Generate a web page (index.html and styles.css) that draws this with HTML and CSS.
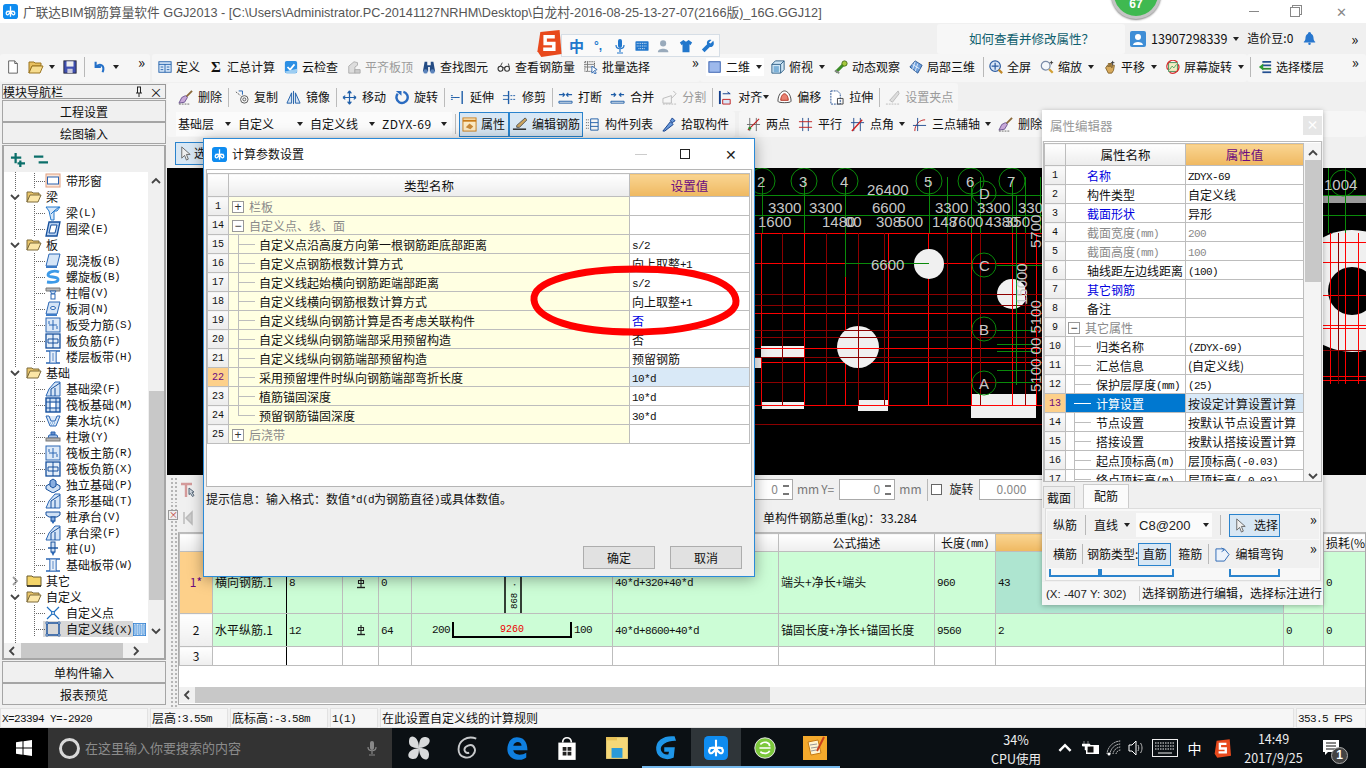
FILE: index.html
```html
<!DOCTYPE html>
<html lang="zh-CN">
<head>
<meta charset="utf-8">
<title>广联达BIM钢筋算量软件</title>
<link rel="stylesheet" href="styles.css">
</head>
<body>
<svg class="defs" aria-hidden="true">
<symbol id="logo" viewBox="0 0 16 16"><rect width="16" height="16" rx="3" fill="#0f8cf0"/><path d="M8 2.500v11M3.500 8H12.500M8 8c-3-1-5 .5-4.500 2.500s3 1 4.500-2.500c1.500 3.500 4 4.500 4.500 2.500S11 7 8 8" fill="none" stroke="#fff" stroke-width="1.400"/></symbol>
<symbol id="new" viewBox="0 0 16 16"><path d="M3 1h7l3 3v11H3z" fill="#fff" stroke="#555"/><path d="M10 1v3h3" fill="#ddd" stroke="#555"/></symbol>
<symbol id="open" viewBox="0 0 16 16"><path d="M1 3h5l1 1h6v3H4l-3 7z" fill="#e8c060" stroke="#9a7420"/><path d="M4 7h11l-3 7H1z" fill="#f6dc8e" stroke="#9a7420"/></symbol>
<symbol id="save" viewBox="0 0 16 16"><rect x="1" y="1" width="14" height="14" fill="#3f4fb0" stroke="#223"/><rect x="4" y="1.500" width="8" height="6" fill="#eee"/><rect x="5" y="10" width="6" height="5" fill="#ccd"/></symbol>
<symbol id="undo" viewBox="0 0 16 16"><path d="M3 2v6h6M3 8c5-5 11-2 8 6" fill="none" stroke="#2470c8" stroke-width="2.400"/></symbol>
<symbol id="def" viewBox="0 0 16 16"><rect x="1" y="2" width="14" height="12" fill="#d6e6f8" stroke="#1c5ca8"/><path d="M1 5h14M8 5v9M3 8h3M3 11h3M10 8h3M10 11h3" stroke="#1c5ca8" fill="none"/></symbol>
<symbol id="cloud" viewBox="0 0 16 16"><rect x="1" y="1" width="14" height="14" rx="2" fill="#2c8fe4"/><path d="M4 8l3 3 5-6" fill="none" stroke="#fff" stroke-width="2"/><path d="M1 13l14-3v3l-2 2H3z" fill="#9ccdf2"/></symbol>
<symbol id="level" viewBox="0 0 16 16"><path d="M2 15V7l6-5 4 1v3l-3 2v7z" fill="#ddd" stroke="#aaa"/><path d="M9 11h6v4H9z" fill="#ccc" stroke="#aaa"/></symbol>
<symbol id="binoc" viewBox="0 0 16 16"><path d="M3 2h3v4h4V2h3l2 11H9V8H7v5H1z" fill="#234b84"/><circle cx="4" cy="13" r="2.500" fill="#5c84bc"/><circle cx="12" cy="13" r="2.500" fill="#5c84bc"/></symbol>
<symbol id="glass" viewBox="0 0 16 16"><circle cx="4" cy="10" r="2.800" fill="none" stroke="#333" stroke-width="1.300"/><circle cx="11.500" cy="10" r="2.800" fill="none" stroke="#333" stroke-width="1.300"/><path d="M6.800 9l2-.5M4 7l2-4M14 8l-1-4" stroke="#333" fill="none"/></symbol>
<symbol id="batch" viewBox="0 0 16 16"><rect x="1" y="2" width="11" height="11" fill="none" stroke="#444" stroke-dasharray="1.500 1"/><path d="M1 5h11M1 8h11M4 2v11" stroke="#777"/><path d="M9 7l6 4-3 1 2 3-2 1-1-3-2 2z" fill="#fff" stroke="#2b66b0"/></symbol>
<symbol id="d2" viewBox="0 0 16 16"><rect x="1" y="2" width="13" height="12" fill="#9db9ec" stroke="#2a55a8"/></symbol>
<symbol id="cube" viewBox="0 0 16 16"><path d="M1 5l4-4h10v10l-4 4H1z" fill="#cfe6f5" stroke="#23567e"/><path d="M1 5h10v10M11 5l4-4" fill="none" stroke="#23567e"/><path d="M3 7h6v7H3z" fill="#7eb2d8"/></symbol>
<symbol id="orbit" viewBox="0 0 16 16"><path d="M2 14L13 3" stroke="#3c8c28" stroke-width="3.500"/><circle cx="12" cy="4" r="3" fill="#a4c83c" stroke="#446a12"/><path d="M1 12l5 3" stroke="#888" stroke-width="2"/></symbol>
<symbol id="cube3" viewBox="0 0 16 16"><path d="M1 8l6-7 8 5-5 9z" fill="#6fa0dc" stroke="#24508c"/><path d="M4 5l8 5M7 2l-3 9M10 4l-3 9" stroke="#e8f0fa" fill="none"/></symbol>
<symbol id="full" viewBox="0 0 16 16"><circle cx="7" cy="7" r="6" fill="#dbe7f7" stroke="#2a5aa0" stroke-width="1.400"/><path d="M7 3v8M3 7h8" stroke="#2a5aa0" stroke-width="1.400"/><path d="M11 11l4 4" stroke="#c08828" stroke-width="2.500"/></symbol>
<symbol id="zoom" viewBox="0 0 16 16"><circle cx="6.500" cy="6.500" r="5" fill="#f4f7fb" stroke="#7a8ba8" stroke-width="1.400"/><path d="M10.500 10.500l4 4" stroke="#d2a034" stroke-width="2.600"/><path d="M13 1v4M11 3h4" stroke="#333"/></symbol>
<symbol id="pan" viewBox="0 0 16 16"><path d="M3 9l2-3 1 2V4h2v4V4h2v5l1-3h2l-1 6-2 3H6z" fill="#d7aa5c" stroke="#80602a"/><path d="M11 1v5M9 3h4" stroke="#333"/></symbol>
<symbol id="rot" viewBox="0 0 16 16"><rect x="3" y="3" width="10" height="10" fill="#f4ecc2" stroke="#3a8a50"/><path d="M4 11l3-4 2 2 3-4" stroke="#40a060" fill="none"/><path d="M2 11A7 7 0 0 1 13 2.500" fill="none" stroke="#d83030" stroke-width="1.500"/><path d="M14 5a7 7 0 0 1-10 9" fill="none" stroke="#d83030" stroke-width="1.500"/></symbol>
<symbol id="floor" viewBox="0 0 16 16"><path d="M5 2h10M5 6h10" stroke="#234f90" stroke-width="2"/><path d="M5 10h10" stroke="#2e8c30" stroke-width="2"/><path d="M5 14h10" stroke="#234f90" stroke-width="2"/><path d="M1 8l5-4v8z" fill="#2e9c34"/></symbol>
<symbol id="del" viewBox="0 0 16 16"><path d="M15 1L6 10" stroke="#8a6a3a" stroke-width="2"/><path d="M8 6l2 2-3 5-6 1 3-6z" fill="#c8a8d8" stroke="#6c5490"/><path d="M1 15h12" stroke="#666" stroke-dasharray="2 1"/></symbol>
<symbol id="copy" viewBox="0 0 16 16"><circle cx="11" cy="10" r="4" fill="none" stroke="#555"/><circle cx="11" cy="10" r="1.600" fill="none" stroke="#555"/><path d="M2 2l5 4" stroke="#555" stroke-dasharray="2 1"/><path d="M5 1h4v4" stroke="#2060b0" fill="none"/></symbol>
<symbol id="mirror" viewBox="0 0 16 16"><path d="M6 3L1 14h5zM10 3l5 11h-5z" fill="#d6e4f4" stroke="#1f5ea8"/><path d="M8 1v14" stroke="#1f5ea8"/></symbol>
<symbol id="move" viewBox="0 0 16 16"><path d="M8 1v14M1 8h14M8 1L6 3.500M8 1l2 2.500M8 15l-2-2.500M8 15l2-2.500M1 8l2.500-2M1 8l2.500 2M15 8l-2.500-2M15 8l-2.500 2" fill="none" stroke="#1f5ea8" stroke-width="1.300"/></symbol>
<symbol id="rotate" viewBox="0 0 16 16"><path d="M10 2a6 6 0 1 1-6 2" fill="none" stroke="#2a6bc0" stroke-width="2.600"/><path d="M2 1h6v5z" fill="#2a6bc0"/></symbol>
<symbol id="ext" viewBox="0 0 16 16"><path d="M13 1v14" stroke="#1f5ea8" stroke-width="1.500"/><path d="M1 6h3M1 10h3M5 8h6" stroke="#1f5ea8" stroke-dasharray="2 1" fill="none"/><path d="M1 8h9" stroke="#1f5ea8"/></symbol>
<symbol id="trim" viewBox="0 0 16 16"><path d="M7 1v14" stroke="#1f5ea8" stroke-width="1.500"/><path d="M1 6h6M1 10h6" stroke="#1f5ea8"/><path d="M9 6h6M9 10h6" stroke="#1f5ea8" stroke-dasharray="2 1"/></symbol>
<symbol id="brk" viewBox="0 0 16 16"><path d="M1 12h14v2H1z" fill="none" stroke="#1f5ea8"/><path d="M1 5h6M9 5h6M5 3l2 2-2 2M11 3L9 5l2 2" fill="none" stroke="#1f5ea8" stroke-width="1.300"/></symbol>
<symbol id="mrg" viewBox="0 0 16 16"><path d="M1 12h14v2H1z" fill="none" stroke="#1f5ea8"/><path d="M1 5h5M10 5h5M4 3l2 2-2 2M12 3l-2 2 2 2" fill="none" stroke="#1f5ea8" stroke-width="1.300"/></symbol>
<symbol id="spl" viewBox="0 0 16 16"><path d="M1 14V9l9-3v8zM12 1l3 3-5 5" fill="none" stroke="#bbb"/><path d="M1 15h14" stroke="#bbb" stroke-dasharray="2 1"/></symbol>
<symbol id="align" viewBox="0 0 16 16"><path d="M2 1v14" stroke="#123e8c" stroke-width="2"/><path d="M5 4h8l-3-2" fill="none" stroke="#123e8c"/><path d="M5 10h8v5H5z" fill="#dbe6f6" stroke="#c02020"/></symbol>
<symbol id="off" viewBox="0 0 16 16"><path d="M1 12C1 5 5 1 8 1s7 4 7 11c0 2-14 2-14 0z" fill="#fff" stroke="#444"/><path d="M4 11C4 7 6 4 8 4s4 3 4 7z" fill="#e88070" stroke="#b03020"/></symbol>
<symbol id="str" viewBox="0 0 16 16"><path d="M2 1h7l3 3v11H2z" fill="#fff" stroke="#1f4c90" stroke-dasharray="2 1"/><path d="M9 9h6v6H9z" fill="none" stroke="#444"/></symbol>
<symbol id="grip" viewBox="0 0 16 16"><path d="M14 1L5 11l3 2 7-9z" fill="#ddd" stroke="#bbb"/><path d="M1 15h14" stroke="#bbb" stroke-dasharray="2 1"/></symbol>
<symbol id="attr" viewBox="0 0 16 16"><rect x="1" y="1" width="14" height="14" fill="#fbeac4" stroke="#c97c1a"/><path d="M1 4h14" stroke="#c97c1a" stroke-width="2"/><path d="M4 11l4-4 4 3-3 3z" fill="#c98a3a"/></symbol>
<symbol id="edit" viewBox="0 0 16 16"><path d="M1 13h14" stroke="#222" stroke-width="1.500"/><path d="M14 1l2 2-8 8H5V9z" fill="#cca35c" stroke="#555"/></symbol>
<symbol id="list" viewBox="0 0 16 16"><path d="M6 2h8v12H6zM6 6h8M6 10h8" fill="none" stroke="#1f5ea8"/><path d="M1 3h3M1 6h3M1 9h3M1 12h3" stroke="#555" stroke-dasharray="1 1"/></symbol>
<symbol id="pick" viewBox="0 0 16 16"><path d="M2 15l8-10 3 3L4 15zM10 4l2-3 3 3-3 2z" fill="#6c9cdc" stroke="#123e8c"/></symbol>
<symbol id="two" viewBox="0 0 16 16"><path d="M4 1v14M11 1v14M1 8h14" stroke="#6e6e6e"/><path d="M2 14L14 2" stroke="#c02020" stroke-width="1.300"/><circle cx="4" cy="12" r="1.500" fill="#2a8a2a"/></symbol>
<symbol id="par" viewBox="0 0 16 16"><path d="M5 1v14M11 1v14" stroke="#234f90"/><path d="M1 5h14M1 11h14" stroke="#c02020"/></symbol>
<symbol id="ang" viewBox="0 0 16 16"><path d="M4 1v14M11 1v14M1 6h14" stroke="#234f90"/><path d="M2 15L13 3" stroke="#d02020" stroke-width="1.500"/></symbol>
<symbol id="tri" viewBox="0 0 16 16"><path d="M3 15C3 8 8 3 14 3" fill="none" stroke="#c02020"/><path d="M1 9h14M6 1v14" stroke="#234f90"/></symbol>
<symbol id="ptr" viewBox="0 0 16 16"><path d="M4 1v12l3-3 2 5 2-1-2-5h4z" fill="#eee" stroke="#666"/></symbol>
<symbol id="plus" viewBox="0 0 16 16"><path d="M6 1v11M1 6h11" stroke="#0b6f6a" stroke-width="2.400"/><path d="M11 9v7M8 12h8" stroke="#0b6f6a" stroke-width="2.400"/></symbol>
<symbol id="minus" viewBox="0 0 16 16"><path d="M1 5h10M6 11h10" stroke="#0b6f6a" stroke-width="2.400"/></symbol>
<symbol id="chup" viewBox="0 0 10 10"><path d="M1 7l4-4 4 4" fill="none" stroke="#444" stroke-width="1.800"/></symbol>
<symbol id="chdn" viewBox="0 0 10 10"><path d="M1 3l4 4 4-4" fill="none" stroke="#444" stroke-width="1.800"/></symbol>
<symbol id="chlf" viewBox="0 0 10 10"><path d="M7 1L3 5l4 4" fill="none" stroke="#444" stroke-width="1.800"/></symbol>
<symbol id="chrt" viewBox="0 0 10 10"><path d="M3 1l4 4-4 4" fill="none" stroke="#444" stroke-width="1.800"/></symbol>
<symbol id="pinn" viewBox="0 0 10 12"><path d="M3 1h4M3.500 1v6M6.500 1v6M2 7h6M5 7v4" fill="none" stroke="#222"/></symbol>
<symbol id="tp" viewBox="0 0 16 16"><path d="M1 2h11M6 2v13" stroke="#d49a9a" stroke-width="2.400"/><path d="M9 6l5 4-2 .5 2 3-1.500 1-2-3-1.500 1z" fill="#cfd6de" stroke="#567"/></symbol>
<symbol id="fo" viewBox="0 0 16 16"><path d="M1 3h5l1 1h6v3H4l-3 6z" fill="#e9c56a" stroke="#7c6a3a"/><path d="M4 6h11l-3 7H1z" fill="#fbe6a6" stroke="#7c6a3a"/></symbol>
<symbol id="fc" viewBox="0 0 16 16"><path d="M1 3h5l1 1h8v9H1z" fill="#f4d468" stroke="#6a5a2a"/><path d="M1 13h14" stroke="#222" stroke-width="1.500"/></symbol>
<symbol id="t-win" viewBox="0 0 16 16"><rect x="1" y="1" width="14" height="13" fill="#fde6d8" stroke="#e0a080"/><rect x="2.500" y="4" width="11" height="7" fill="#fff" stroke="#2a62b0"/></symbol>
<symbol id="t-beam" viewBox="0 0 16 16"><path d="M1 2h14l-3 4H9v9H6L4 6z" fill="#d7e7f8" stroke="#2278cc"/><path d="M9 6l5-4M6 9l3-3" stroke="#2278cc"/></symbol>
<symbol id="t-ring" viewBox="0 0 16 16"><path d="M4 1h11l-3 14H1z" fill="#b6d0f0" stroke="#154f9c" stroke-width="1.300"/><path d="M6 4h6l-2 8H4z" fill="#fff" stroke="#154f9c"/></symbol>
<symbol id="t-slab" viewBox="0 0 16 16"><path d="M4 1h11l-3 12H1z" fill="#d5e5f7" stroke="#2a66b4"/><path d="M1 13h11v2H1z" fill="#3d7cc8"/></symbol>
<symbol id="t-spiral" viewBox="0 0 16 16"><path d="M14 3C9 1 3 3 3 6s9 1 10 4-5 4-11 3" fill="none" stroke="#3c9ae8" stroke-width="2.800"/></symbol>
<symbol id="t-cap" viewBox="0 0 16 16"><path d="M1 3h14v3H1z" fill="#b9b9b9" stroke="#777"/><path d="M5 6h6l-2 3H7z" fill="#d6e6f6" stroke="#2a66b4"/><rect x="6" y="9" width="4" height="5" fill="#fff" stroke="#2a66b4"/></symbol>
<symbol id="t-hole" viewBox="0 0 16 16"><path d="M4 1h11l-3 12H1z" fill="#d5e5f7" stroke="#2a66b4"/><path d="M1 13h11v2H1z" fill="#3d7cc8"/><ellipse cx="8" cy="7" rx="2.500" ry="1.500" fill="#fff" stroke="#2a66b4"/></symbol>
<symbol id="t-force" viewBox="0 0 16 16"><rect x="1" y="1" width="14" height="14" fill="#dce9f8" stroke="#2a66b4"/><path d="M8 3v10M4 8h8M4 4v3M12 9v3" stroke="#2a66b4" fill="none"/></symbol>
<symbol id="t-neg" viewBox="0 0 16 16"><rect x="1" y="1" width="14" height="14" fill="#e4eef9" stroke="#154f9c" stroke-width="1.300"/><path d="M8 1v14M3 6h10v4H3z" stroke="#154f9c" fill="none"/></symbol>
<symbol id="t-strip" viewBox="0 0 16 16"><path d="M1 2h14M1 14h14M5 2v12M11 2v12M8 4v8" stroke="#2a66b4" stroke-width="1.300" fill="#cfe0f4"/><rect x="5" y="2" width="6" height="12" fill="#cfe0f4" opacity=".5"/></symbol>
<symbol id="t-fbeam" viewBox="0 0 16 16"><path d="M1 15l3-7 6-7h5v14z" fill="#d5e5f7" stroke="#2a66b4"/><path d="M6 15V8l9-6M10 15V7" stroke="#154f9c" fill="none"/></symbol>
<symbol id="t-raft" viewBox="0 0 16 16"><rect x="1" y="1" width="14" height="14" fill="#cfe0f4" stroke="#154f9c" stroke-width="1.400"/><path d="M1 5h14M1 11h14M5 1v14M11 1v14" stroke="#154f9c"/><rect x="6" y="6" width="4" height="4" fill="#fff"/></symbol>
<symbol id="t-pit" viewBox="0 0 16 16"><path d="M1 3h3l2 5h4l2-5h3M1 3l4 10h6l4-10" fill="#dbe8f7" stroke="#2a66b4"/><path d="M5 10h6M6 12h4" stroke="#4a8ad0" stroke-dasharray="1 1"/></symbol>
<symbol id="t-pier" viewBox="0 0 16 16"><path d="M6 3h4v3H6z" fill="#6a8ec8" stroke="#2a66b4"/><path d="M4 6h8l1 3H3z" fill="#aac4e8" stroke="#2a66b4"/><rect x="1" y="9" width="14" height="3" fill="#b4b4b4" stroke="#777"/></symbol>
<symbol id="t-ind" viewBox="0 0 16 16"><path d="M1 9l7-4 7 4v3l-7 4-7-4z" fill="#cfe0f4" stroke="#154f9c"/><path d="M5 4l3-2 3 2v5l-3 2-3-2z" fill="#88aee0" stroke="#154f9c"/></symbol>
<symbol id="t-pcap" viewBox="0 0 16 16"><path d="M1 3h14v3l-3 2H4L1 6z" fill="#cfe0f4" stroke="#154f9c"/><rect x="6" y="8" width="4" height="4" fill="#88aee0" stroke="#154f9c"/><path d="M6 12h4l-2 3z" fill="#2a66b4"/></symbol>
<symbol id="t-pile" viewBox="0 0 16 16"><rect x="6" y="1" width="4" height="10" fill="#cfe0f4" stroke="#154f9c"/><path d="M3 7h10" stroke="#154f9c" stroke-width="1.400"/><path d="M6 11h4l-2 4z" fill="#2a66b4"/></symbol>
<symbol id="t-x" viewBox="0 0 16 16"><path d="M2 2l12 12M14 2L2 14" stroke="#1f6fc0" stroke-width="1.200"/><circle cx="8" cy="8" r="1.500" fill="#fff" stroke="#1f6fc0"/></symbol>
<symbol id="t-sq" viewBox="0 0 16 16"><rect x="2" y="2" width="12" height="12" fill="none" stroke="#1f56a0" stroke-width="1.500"/><path d="M1 1h2v2H1zM13 1h2v2h-2zM1 13h2v2H1zM13 13h2v2h-2z" fill="#fff" stroke="#1f56a0" stroke-width=".8"/></symbol>
<symbol id="t-col" viewBox="0 0 16 16"><rect x=".5" y=".5" width="15" height="15" fill="#fff" stroke="#2a7cd0"/><path d="M2 2h3v12H2zM6.500 2h3v12h-3zM11 2h3v12h-3z" fill="#a6ccf2" stroke="#2a7cd0" stroke-width=".6"/></symbol>
<symbol id="rb" viewBox="0 0 12 12"><path d="M6 1v9M3.500 3.500h5v3h-5z" fill="none" stroke="#222" stroke-width="1.100"/><path d="M2 10.500h8" stroke="#222" stroke-width="1.400"/></symbol>
<symbol id="nav1" viewBox="0 0 12 16"><path d="M2 2v12M10 2L4 8l6 6z" fill="#ccc" stroke="#bbb" stroke-width="1.500"/></symbol>
<symbol id="hook" viewBox="0 0 16 16"><path d="M1 2h9l5 6-5 7H1z" fill="#edf3fb" stroke="#2a66b4"/><path d="M7 1l3 2-3 2" fill="none" stroke="#2a66b4"/></symbol>
<symbol id="user" viewBox="0 0 16 16"><rect width="16" height="16" rx="2" fill="#3f8ed6"/><circle cx="8" cy="6" r="3" fill="#fff"/><path d="M3 14c0-4 10-4 10 0z" fill="#fff"/></symbol>
<symbol id="bell" viewBox="0 0 16 16"><path d="M8 0a2 2 0 0 1 2 2c2 1 3 3 3 6 0 2 1 3 2 4v1H1v-1c1-1 2-2 2-4 0-3 1-5 3-6a2 2 0 0 1 2-2z" fill="#2877ce"/><circle cx="8" cy="14.500" r="1.500" fill="#2877ce"/></symbol>
<symbol id="s-logo" viewBox="0 0 26 28"><path d="M4 2l20-2 2 25-21 3-4-6z" fill="#e8491c"/><path d="M19 7H9v7h9v6H7" fill="none" stroke="#fff" stroke-width="3.600"/></symbol>
<symbol id="mic" viewBox="0 0 12 16"><rect x="4" y="1" width="4" height="9" rx="2" fill="currentColor"/><path d="M2 7c0 5 8 5 8 0M6 11v3M3 15h6" fill="none" stroke="currentColor" stroke-width="1.200"/></symbol>
<symbol id="kb" viewBox="0 0 16 12"><rect x=".5" y=".5" width="15" height="11" rx="1" fill="#2277cc"/><path d="M2 3h12M2 6h12M4 9h8" stroke="#fff" stroke-dasharray="1 1"/></symbol>
<symbol id="person" viewBox="0 0 16 16"><circle cx="7" cy="5" r="3.500" fill="#9ab"/><path d="M1 15c0-5 12-5 12 0z" fill="#9ab"/></symbol>
<symbol id="shirt" viewBox="0 0 16 16"><path d="M5 1L1 4l2 3 1-1v9h8V6l1 1 2-3-4-3-3 2z" fill="#2277cc"/></symbol>
<symbol id="wrench" viewBox="0 0 16 16"><path d="M14 2l-3 3-2-1 3-3C8 0 6 3 7 6L1 12l3 3 6-6c3 1 6-2 4-7z" fill="#2277cc"/></symbol>
<symbol id="win" viewBox="0 0 16 16"><path d="M0 2.300l6.500-1v6.200H0zM7.500 1.200L16 0v7.500H7.500zM0 8.500h6.500v6.200l-6.500-1zM7.500 8.500H16V16l-8.500-1.200z" fill="#fff"/></symbol>
<symbol id="fan" viewBox="0 0 22 24"><path d="M11 12C3 12 1 9 2 4s9-3 9 8zM11 12c0-8 2-11 7-10s4 9-7 10zM11 12c8 0 10 3 9 8s-9 3-9-8zM11 12c0 8-2 11-7 10s-4-9 7-10z" fill="#d8dadc"/></symbol>
<symbol id="spi" viewBox="0 0 20 22"><path d="M17 3C9 0 2 5 2 12s8 9 12 5 1-10-4-8-3 7 1 6" fill="none" stroke="#c8cacc" stroke-width="1.600"/></symbol>
<symbol id="edge" viewBox="0 0 20 22"><path d="M18 13C18 5 14 2 9 2 4 2 1 7 1 12c0 6 5 9 10 9 3 0 5-1 6-2v-4c-3 2-10 3-11-2zM6 9c1-4 7-4 7 0z" fill="#0f7fe0"/></symbol>
<symbol id="store" viewBox="0 0 20 24"><path d="M2 7h16v16H2z" fill="#fff"/><path d="M6 7c0-6 8-6 8 0" fill="none" stroke="#fff" stroke-width="1.500"/><path d="M6 11h3.500v3.500H6zM10.500 11H14v3.500h-3.500zM6 15.500h3.500V19H6zM10.500 15.500H14V19h-3.500z" fill="#222"/></symbol>
<symbol id="fold" viewBox="0 0 22 22"><path d="M1 1h20v20H1z" fill="#f5d878"/><path d="M1 1h10v3H1z" fill="#e8c258"/><rect x="6" y="11" width="10" height="9" fill="#2a9ad8"/></symbol>
<symbol id="gg" viewBox="0 0 24 26"><path d="M20 2C9 1 2 7 3 15s10 10 16 7l1-9h-9v3h5l-1 4c-5 1-9-2-9-6s6-9 15-9z" fill="#1f96e8" stroke="#1f96e8" stroke-width="1.500"/></symbol>
<symbol id="green" viewBox="0 0 24 28"><circle cx="12" cy="14" r="11" fill="#7cc83c" stroke="#eee"/><path d="M6 14h12M7 10c4-4 10-2 10 2M7 18c4 3 9 2 10-1" fill="none" stroke="#fff" stroke-width="1.800"/></symbol>
<symbol id="note" viewBox="0 0 24 26"><rect x="0" y="1" width="24" height="24" fill="#f4a92c"/><path d="M5 7l10-2 3 13-10 2z" fill="#fff4d0" stroke="#c47a14"/><path d="M7 10l7-1M8 13l7-1M8 16l5-1" stroke="#999"/><path d="M21 2l-7 14" stroke="#c8401c" stroke-width="2"/></symbol>
<symbol id="batt" viewBox="0 0 18 16"><rect x="4" y="5" width="13" height="9" fill="#fff"/><rect x="5.500" y="6.500" width="6" height="6" fill="#111"/><path d="M2 1v6M6 1v4M0 4h8v2H5v4H3V6H0z" fill="#fff" stroke="#fff" stroke-width=".5"/></symbol>
<symbol id="wifi" viewBox="0 0 16 16"><path d="M1 14a14 14 0 0 1 14-13M4 14a11 11 0 0 1 11-10M7 14a8 8 0 0 1 8-7M10 14a5 5 0 0 1 5-4" fill="none" stroke="#ddd" stroke-dasharray="1.500 .8"/><circle cx="3" cy="14" r="1.500" fill="#fff"/></symbol>
<symbol id="spk" viewBox="0 0 18 16"><path d="M1 5h3l4-4v14l-4-4H1z" fill="none" stroke="#fff"/><path d="M10 5c1 2 1 4 0 6M12.500 3c2 3 2 7 0 10" fill="none" stroke="#bbb"/></symbol>
<symbol id="kbd" viewBox="0 0 26 18"><rect x=".5" y=".5" width="25" height="17" fill="none" stroke="#eee"/><path d="M3 4h20M3 7h20M3 10h20" stroke="#eee" stroke-dasharray="1.500 1"/><path d="M6 14h14" stroke="#eee"/></symbol>
<symbol id="act" viewBox="0 0 16 16"><path d="M0 0h16v12H5l-3 3v-3H0z" fill="#fff"/><path d="M3 3h10M3 6h10M3 9h10" stroke="#111"/></symbol>
</svg>

<div class="app">
  <header class="titlebar">
    <svg class="tlogo"><use href="#logo"/></svg>
    <span class="ttext">广联达BIM钢筋算量软件 GGJ2013 - [C:\Users\Administrator.PC-20141127NRHM\Desktop\白龙村-2016-08-25-13-27-07(2166版)_16G.GGJ12]</span>
    <div class="wctl">
      <span class="wmin"></span><span class="wmax"></span><span class="wx">✕</span>
    </div>
  </header>

  <div class="acct">
    <div class="help">如何查看并修改属性？</div>
    <svg class="i16"><use href="#user"/></svg>
    <span class="phone">13907298339</span><i class="car"></i>
    <span class="bean">造价豆:0</span>
    <svg class="bell"><use href="#bell"/></svg>
    <span class="more">»</span>
  </div>

  <div class="tb1">
    <div class="band b-a">
      <svg class="i"><use href="#new"/></svg>
      <svg class="i18 o1"><use href="#open"/></svg><i class="car c1"></i>
      <svg class="i o2"><use href="#save"/></svg>
      <i class="sep s1"></i>
      <svg class="i"><use href="#undo"/></svg><i class="car c3"></i>
      <span class="more m1">»</span>
    </div>
    <div class="band b-b">
      <span class="t"><svg class="i"><use href="#def"/></svg>定义</span>
      <span class="t"><b class="sig">Σ</b>汇总计算</span>
      <span class="t"><svg class="i"><use href="#cloud"/></svg>云检查</span>
      <span class="t off"><svg class="i"><use href="#level"/></svg>平齐板顶</span>
      <span class="t"><svg class="i"><use href="#binoc"/></svg>查找图元</span>
      <span class="t"><svg class="i"><use href="#glass"/></svg>查看钢筋量</span>
      <span class="t"><svg class="i"><use href="#batch"/></svg>批量选择</span>
      <span class="more m2">»</span>
    </div>
    <div class="band b-c">
      <span class="t cw"><svg class="i"><use href="#d2"/></svg>二维<i class="car"></i></span>
      <span class="t"><svg class="i"><use href="#cube"/></svg>俯视<i class="car"></i></span>
      <span class="t"><svg class="i"><use href="#orbit"/></svg>动态观察</span>
      <span class="t"><svg class="i"><use href="#cube3"/></svg>局部三维</span>
      <i class="sep s2"></i>
      <span class="t"><svg class="i"><use href="#full"/></svg>全屏</span>
      <span class="t"><svg class="i"><use href="#zoom"/></svg>缩放<i class="car"></i></span>
      <span class="t"><svg class="i"><use href="#pan"/></svg>平移<i class="car"></i></span>
      <span class="t t0"><svg class="i"><use href="#rot"/></svg>屏幕旋转<i class="car"></i></span>
    </div>
    <div class="band b-d">
      <i class="sep s3"></i>
      <span class="t"><svg class="i"><use href="#floor"/></svg>选择楼层</span>
      <span class="more m5">»</span>
    </div>
  </div>

  <div class="work">
    <aside class="nav">
      <div class="navh"><span>模块导航栏</span><svg class="pin"><use href="#pinn"/></svg><span class="navx">×</span></div>
      <div class="nbtn">工程设置</div>
      <div class="nbtn">绘图输入</div>
      <div class="treebox">
        <div class="treetop"><svg class="pm"><use href="#plus"/></svg><svg class="pm pm2"><use href="#minus"/></svg></div>
        <div class="treewrap">
          <div class="tree">
            <div class="ti"><i class="st"></i><svg class="i16"><use href="#t-win"/></svg>带形窗</div>
            <div class="tg"><svg class="ar"><use href="#chdn"/></svg><svg class="i16"><use href="#fo"/></svg>梁</div>
            <div class="ti"><i class="st"></i><svg class="i16"><use href="#t-beam"/></svg>梁<span class="m">(L)</span></div>
            <div class="ti"><i class="st"></i><svg class="i16"><use href="#t-ring"/></svg>圈梁<span class="m">(E)</span></div>
            <div class="tg"><svg class="ar"><use href="#chdn"/></svg><svg class="i16"><use href="#fo"/></svg>板</div>
            <div class="ti"><i class="st"></i><svg class="i16"><use href="#t-slab"/></svg>现浇板<span class="m">(B)</span></div>
            <div class="ti"><i class="st"></i><svg class="i16"><use href="#t-spiral"/></svg>螺旋板<span class="m">(B)</span></div>
            <div class="ti"><i class="st"></i><svg class="i16"><use href="#t-cap"/></svg>柱帽<span class="m">(V)</span></div>
            <div class="ti"><i class="st"></i><svg class="i16"><use href="#t-hole"/></svg>板洞<span class="m">(N)</span></div>
            <div class="ti"><i class="st"></i><svg class="i16"><use href="#t-force"/></svg>板受力筋<span class="m">(S)</span></div>
            <div class="ti"><i class="st"></i><svg class="i16"><use href="#t-neg"/></svg>板负筋<span class="m">(F)</span></div>
            <div class="ti"><i class="st"></i><svg class="i16"><use href="#t-strip"/></svg>楼层板带<span class="m">(H)</span></div>
            <div class="tg"><svg class="ar"><use href="#chdn"/></svg><svg class="i16"><use href="#fo"/></svg>基础</div>
            <div class="ti"><i class="st"></i><svg class="i16"><use href="#t-fbeam"/></svg>基础梁<span class="m">(F)</span></div>
            <div class="ti"><i class="st"></i><svg class="i16"><use href="#t-raft"/></svg>筏板基础<span class="m">(M)</span></div>
            <div class="ti"><i class="st"></i><svg class="i16"><use href="#t-pit"/></svg>集水坑<span class="m">(K)</span></div>
            <div class="ti"><i class="st"></i><svg class="i16"><use href="#t-pier"/></svg>柱墩<span class="m">(Y)</span></div>
            <div class="ti"><i class="st"></i><svg class="i16"><use href="#t-force"/></svg>筏板主筋<span class="m">(R)</span></div>
            <div class="ti"><i class="st"></i><svg class="i16"><use href="#t-neg"/></svg>筏板负筋<span class="m">(X)</span></div>
            <div class="ti"><i class="st"></i><svg class="i16"><use href="#t-ind"/></svg>独立基础<span class="m">(P)</span></div>
            <div class="ti"><i class="st"></i><svg class="i16"><use href="#t-fbeam"/></svg>条形基础<span class="m">(T)</span></div>
            <div class="ti"><i class="st"></i><svg class="i16"><use href="#t-pcap"/></svg>桩承台<span class="m">(V)</span></div>
            <div class="ti"><i class="st"></i><svg class="i16"><use href="#t-fbeam"/></svg>承台梁<span class="m">(F)</span></div>
            <div class="ti"><i class="st"></i><svg class="i16"><use href="#t-pile"/></svg>桩<span class="m">(U)</span></div>
            <div class="ti"><i class="st"></i><svg class="i16"><use href="#t-strip"/></svg>基础板带<span class="m">(W)</span></div>
            <div class="tg"><svg class="ar ar2"><use href="#chrt"/></svg><svg class="i16"><use href="#fc"/></svg>其它</div>
            <div class="tg"><svg class="ar"><use href="#chdn"/></svg><svg class="i16"><use href="#fo"/></svg>自定义</div>
            <div class="ti"><i class="st"></i><svg class="i16"><use href="#t-x"/></svg>自定义点</div>
            <div class="ti sel"><i class="st"></i><svg class="i16"><use href="#t-sq"/></svg><span class="seltext">自定义线<span class="m">(X)</span></span><svg class="colic"><use href="#t-col"/></svg></div>
          </div>
          <div class="vs">
            <svg class="chv"><use href="#chup"/></svg>
            <div class="vth"></div>
            <svg class="chv"><use href="#chdn"/></svg>
          </div>
        </div>
        <div class="hs"><svg class="chv"><use href="#chlf"/></svg><div class="hth"></div><svg class="chv"><use href="#chrt"/></svg></div>
      </div>
      <div class="nbtn">单构件输入</div>
      <div class="nbtn">报表预览</div>
    </aside>

    <main class="main">
      <div class="tb2">
        <div class="band2">
          <span class="t"><svg class="j"><use href="#del"/></svg>删除</span><i class="sp"></i>
          <span class="t"><svg class="j"><use href="#copy"/></svg>复制</span>
          <span class="t"><svg class="j"><use href="#mirror"/></svg>镜像</span><i class="sp"></i>
          <span class="t"><svg class="j"><use href="#move"/></svg>移动</span>
          <span class="t"><svg class="j"><use href="#rotate"/></svg>旋转</span><i class="sp"></i>
          <span class="t"><svg class="j"><use href="#ext"/></svg>延伸</span>
          <span class="t"><svg class="j"><use href="#trim"/></svg>修剪</span><i class="sp"></i>
          <span class="t"><svg class="j"><use href="#brk"/></svg>打断</span>
          <span class="t"><svg class="j"><use href="#mrg"/></svg>合并</span>
          <span class="t off"><svg class="j"><use href="#spl"/></svg>分割</span><i class="sp"></i>
          <span class="t"><svg class="j"><use href="#align"/></svg>对齐<i class="car"></i></span>
          <span class="t"><svg class="j"><use href="#off"/></svg>偏移</span>
          <span class="t"><svg class="j"><use href="#str"/></svg>拉伸</span><i class="sp"></i>
          <span class="t off"><svg class="j"><use href="#grip"/></svg>设置夹点</span>
        </div>
      </div>
      <div class="tb3">
        <div class="band3">
          <span class="combo c60">基础层<i class="car"></i></span>
          <span class="combo c72">自定义<i class="car"></i></span>
          <span class="combo c72">自定义线<i class="car"></i></span>
          <span class="combo c72"><span class="zd">ZDYX-69</span><i class="car"></i></span>
          <i class="sep s4"></i>
          <span class="btn bn1"><svg class="j"><use href="#attr"/></svg>属性</span>
          <span class="btn bn2"><svg class="j"><use href="#edit"/></svg>编辑钢筋</span>
          <span class="t tl"><svg class="j"><use href="#list"/></svg>构件列表</span>
          <span class="t"><svg class="j"><use href="#pick"/></svg>拾取构件</span>
        </div>
        <div class="band4">
          <span class="t"><svg class="j"><use href="#two"/></svg>两点</span>
          <span class="t"><svg class="j"><use href="#par"/></svg>平行</span>
          <span class="t"><svg class="j"><use href="#ang"/></svg>点角<i class="car"></i></span>
          <span class="t"><svg class="j"><use href="#tri"/></svg>三点辅轴<i class="car"></i></span>
          <span class="t"><svg class="j"><use href="#del"/></svg>删除</span>
        </div>
      </div>
      <div class="tb4"><span class="btn bn3"><svg class="j"><use href="#ptr"/></svg>选择</span></div>

      <svg class="cad" viewBox="167 168 1199 307">
        <g class="rb"><path d="M203 233H1042M203 263H1042M203 313H1042M203 348H1042M203 362H1042M203 405H1042"/><path d="M761 233V405M804 233V405M845 233V405M888 233V405M928 233V405M971 233V405M1012 233V405M1036 233V405"/></g>
        <circle class="wh" cx="929" cy="264" r="15"/><circle class="wh" cx="858" cy="347" r="21"/><circle class="wh" cx="1012" cy="294" r="15"/>
        <path class="wh" d="M761 346h43v11h-43zM755 358h6v10h-6zM762 402h42v7h-42zM858 400h30v11h-30zM971 394h65v24h-65z"/>
        <g class="rd"><path d="M755 294H1042M755 305H1042M755 330H1042M755 337H1042M755 357H1042M755 382H1042M755 424H1042"/><path d="M782 233V405M826 233V405M858 233V405M884 233V405M947 233V405M980 233V405M1025 233V405"/></g>
        <g class="rb"><path d="M761 348H880M761 405H1036M971 394V405M1012 394V405M1012 279V309"/></g>
        <g class="gr"><path d="M755 195H1042M755 215H1042M762 177V233M804 177V233M845 177V277M929 177V233M947 177V233M971 177V233M980 177V233M1012 177V233M1025 177V233M1040 177V233M845 263H929M1016 195V385M997 265H1042M997 330H1035M997 344H1035M997 351H1035M997 370H1035M997 382H1035"/></g>
        <g class="grc"><circle cx="762" cy="181" r="13"/><circle cx="804" cy="181" r="13"/><circle cx="845" cy="181" r="13"/><circle cx="929" cy="181" r="13"/><circle cx="971" cy="181" r="13"/><circle cx="1012" cy="181" r="13"/><circle cx="984" cy="193" r="12"/><circle cx="984" cy="265" r="12"/><circle cx="984" cy="329" r="12"/><circle cx="984" cy="383" r="12"/></g>
        <g class="cx">
          <text x="757" y="187">2</text><text x="799" y="187">3</text><text x="840" y="187">4</text><text x="924" y="187">5</text><text x="966" y="187">6</text><text x="1007" y="187">7</text>
          <text x="979" y="199">D</text><text x="979" y="271">C</text><text x="979" y="335">B</text><text x="979" y="389">A</text>
          <text x="867" y="195">26400</text><text x="871" y="270">6600</text>
          <text x="768" y="213">3300</text><text x="809" y="213">3300</text><text x="872" y="213">6600</text><text x="935" y="213">3300</text><text x="977" y="213">3300</text><text x="1018" y="213">330</text>
          <text x="758" y="227">1600</text><text x="822" y="227">1480</text><text x="845" y="227">00</text><text x="876" y="227">308</text><text x="898" y="227">500</text><text x="932" y="227">148</text><text x="950" y="227">7600</text><text x="985" y="227">4380</text><text x="1005" y="227">350</text>
          <text class="v1" x="0" y="0">15000</text><text class="v2" x="0" y="0">5700</text><text class="v3" x="0" y="0">5100 00 5100</text>
        </g>
        <circle class="wh" cx="1352" cy="291" r="61"/><circle class="blk" cx="1352" cy="291" r="24"/>
        <rect class="gb" x="1323" y="195" width="43" height="8"/>
        <g class="rb"><path d="M1323 242H1366M1323 262H1366M1323 295H1366M1323 325H1366M1323 328H1366M1323 376H1366M1323 380H1366M1330 233V384M1345 233V384M1358 233V384"/></g>
        <g class="rd"><path d="M1323 350H1366M1338 233V384"/></g>
        <g class="gr"><path d="M1328 168V233M1345 168V233M1323 195H1366M1323 215H1366"/></g>
        <circle class="grc2" cx="1343" cy="183" r="13"/>
        <text class="cx" x="1324" y="190">1004</text>
      </svg>

      <div class="inrow">
        <div class="dots dr"></div>
        <svg class="rowic"><use href="#tp"/></svg>
        <div class="incell i-a">0<span class="spin"></span></div>
        <span class="gtx">mm</span><span class="gtx g2">Y=</span>
        <div class="incell i-b">0<span class="spin"></span></div>
        <span class="gtx">mm</span><i class="sep s5"></i>
        <span class="chk"></span><span class="rotlbl">旋转</span>
        <div class="incell i-c">0.000</div>
      </div>

      <div class="rebar">
        <div class="dots dv"><span class="xmark">×</span></div>
        <div class="rbody">
          <div class="rtb"><svg class="nav1"><use href="#nav1"/></svg><span class="total">单构件钢筋总重(kg)：33.284</span></div>
          <div class="rtable">
            <table class="grid">
              <colgroup><col class="g0"><col class="g1"><col class="g2c"><col class="g3"><col class="g4"><col class="g5"><col class="g6"><col class="g7"><col class="g8"><col class="g9"><col class="g10"><col class="g11"></colgroup>
              <tr class="gh"><th></th><th>筋号</th><th>直径(mm)</th><th>级别</th><th>图号</th><th>图形</th><th>计算公式</th><th>公式描述</th><th>长度<span class="m">(mm)</span></th><th class="oh">根数</th><th>搭接</th><th class="nw">损耗(%)</th></tr>
              <tr class="r1"><td class="sn act">1*</td><td>横向钢筋.1</td><td><span class="m">8</span></td><td class="ctr"><svg class="rbs"><use href="#rb"/></svg></td><td><span class="m">0</span></td>
                <td class="shape"><svg class="sh1" viewBox="0 0 20 60"><path d="M1 0V60M17 0V60" stroke="#000" stroke-width="1.500"/><text class="rot" transform="translate(13 56) rotate(-90)">868 · 68</text></svg></td>
                <td><span class="m">40*d+320+40*d</span></td><td>端头+净长+端头</td><td><span class="m">960</span></td><td class="tq"><span class="m">43</span></td><td></td><td><span class="m">0</span></td></tr>
              <tr class="r2"><td class="sn">2</td><td>水平纵筋.1</td><td><span class="m">12</span></td><td class="ctr"><svg class="rbs"><use href="#rb"/></svg></td><td><span class="m">64</span></td>
                <td class="shape"><div class="ushape"><span class="m">200</span><svg class="sh2" viewBox="0 0 120 20"><path d="M1 2V17H119V2" fill="none" stroke="#000" stroke-width="2"/><text x="60" y="12" class="redt">9260</text></svg><span class="m">100</span></div></td>
                <td><span class="m">40*d+8600+40*d</span></td><td>锚固长度+净长+锚固长度</td><td><span class="m">9560</span></td><td><span class="m">2</span></td><td><span class="m">0</span></td><td><span class="m">0</span></td></tr>
              <tr class="r3"><td class="sn">3</td><td></td><td></td><td></td><td></td><td></td><td></td><td></td><td></td><td></td><td></td><td></td></tr>
            </table>
            <div class="ghs"><svg class="chv"><use href="#chlf"/></svg><div class="ghth"></div></div>
          </div>
        </div>
      </div>
    </main>
  </div>

  <footer class="status">
    <div class="sc s-a"><span class="m">X=23394 Y=-2920</span></div>
    <div class="sc s-b">层高<span class="m">:3.55m</span></div>
    <div class="sc s-c">底标高<span class="m">:-3.58m</span></div>
    <div class="sc s-d"><span class="m">1(1)</span></div>
    <div class="sc s-e">在此设置自定义线的计算规则</div>
    <div class="sc s-f"><span class="m">353.5 FPS</span></div>
  </footer>

  <nav class="taskbar">
    <div class="start"><svg class="winl"><use href="#win"/></svg></div>
    <div class="search"><i class="ring"></i><span class="stext">在这里输入你要搜索的内容</span><svg class="smic"><use href="#mic"/></svg></div>
    <div class="apps">
      <div class="app1"><svg class="ta"><use href="#fan"/></svg></div>
      <div class="app1"><svg class="ta"><use href="#spi"/></svg></div>
      <div class="app1"><svg class="ta"><use href="#edge"/></svg></div>
      <div class="app1"><svg class="ta"><use href="#store"/></svg></div>
      <div class="app1"><svg class="ta"><use href="#fold"/></svg></div>
      <div class="app1 run"><svg class="ta"><use href="#gg"/></svg></div>
      <div class="app1 run cur"><svg class="ta"><use href="#logo"/></svg></div>
      <div class="app1 run"><svg class="ta"><use href="#green"/></svg></div>
      <div class="app1 run"><svg class="ta"><use href="#note"/></svg></div>
    </div>
    <div class="tray">
      <div class="cpu"><span>34%</span><span>CPU使用</span></div>
      <div class="tc tc28"><svg class="tri"><use href="#chup"/></svg></div>
      <div class="tc tc23"><svg class="tr"><use href="#batt"/></svg></div>
      <div class="tc tc24"><svg class="tr"><use href="#wifi"/></svg></div>
      <div class="tc tc22"><svg class="tr"><use href="#spk"/></svg></div>
      <div class="tc tc34"><svg class="trk"><use href="#kbd"/></svg></div>
      <div class="tc tc25 zh">中</div>
      <div class="tc tc30"><svg class="trs"><use href="#s-logo"/></svg></div>
      <div class="clock"><span>14:49</span><span>2017/9/25</span></div>
      <div class="tc tc46"><svg class="actc"><use href="#act"/></svg><span class="badge">1</span></div>
    </div>
  </nav>

  <div class="score"><span>67</span></div>

  <div class="sogou">
    <svg class="slogo"><use href="#s-logo"/></svg>
    <div class="sbar">
      <b class="szh">中</b><b class="spu">°,</b>
      <svg class="si sb"><use href="#mic"/></svg>
      <svg class="si"><use href="#kb"/></svg>
      <svg class="si"><use href="#person"/></svg>
      <svg class="si"><use href="#shirt"/></svg>
      <svg class="si"><use href="#wrench"/></svg>
    </div>
  </div>

  <section class="dialog">
    <div class="dtitle">
      <svg class="dlogo"><use href="#logo"/></svg><span class="dname">计算参数设置</span>
      <span class="dmin"></span><span class="dmax"></span><span class="dx">✕</span>
    </div>
    <div class="dbox">
      <table class="pt ptd">
        <colgroup><col class="dc0"><col class="dc1"><col class="dc2"></colgroup>
        <tr class="hd"><th></th><th>类型名称</th><th class="ov">设置值</th></tr>
        <tr><td class="no">1</td><td class="nm gp"><i class="box">+</i>栏板</td><td></td></tr>
        <tr><td class="no">14</td><td class="nm gp"><i class="box">−</i>自定义点、线、面</td><td></td></tr>
        <tr><td class="no">15</td><td class="nm br">自定义点沿高度方向第一根钢筋距底部距离</td><td><span class="m">s/2</span></td></tr>
        <tr><td class="no">16</td><td class="nm br">自定义点钢筋根数计算方式</td><td>向上取整<span class="m">+1</span></td></tr>
        <tr><td class="no">17</td><td class="nm br">自定义线起始横向钢筋距端部距离</td><td><span class="m">s/2</span></td></tr>
        <tr><td class="no">18</td><td class="nm br">自定义线横向钢筋根数计算方式</td><td>向上取整<span class="m">+1</span></td></tr>
        <tr><td class="no">19</td><td class="nm br">自定义线纵向钢筋计算是否考虑关联构件</td><td class="lk">否</td></tr>
        <tr><td class="no">20</td><td class="nm br">自定义线纵向钢筋端部采用预留构造</td><td>否</td></tr>
        <tr><td class="no">21</td><td class="nm br">自定义线纵向钢筋端部预留构造</td><td>预留钢筋</td></tr>
        <tr class="cur"><td class="no">22</td><td class="nm br">采用预留埋件时纵向钢筋端部弯折长度</td><td><span class="m">10*d</span></td></tr>
        <tr><td class="no">23</td><td class="nm br">植筋锚固深度</td><td><span class="m">10*d</span></td></tr>
        <tr><td class="no">24</td><td class="nm br last">预留钢筋锚固深度</td><td><span class="m">30*d</span></td></tr>
        <tr><td class="no">25</td><td class="nm gp"><i class="box">+</i>后浇带</td><td></td></tr>
      </table>
    </div>
    <p class="hint">提示信息：输入格式：数值<span class="m">*d(d</span>为钢筋直径<span class="m">)</span>或具体数值。</p>
    <div class="dfoot"><span class="dbtn">确定</span><span class="dbtn">取消</span></div>
  </section>

  <svg class="oval" viewBox="0 0 220 76"><path d="M8 37C6 18 52 6 110 6c60 0 99 12 100 32 1 18-48 31-102 31C48 69 10 56 8 37z" fill="none" stroke="#f00" stroke-width="7"/></svg>

  <section class="editor">
    <div class="etitle"><span>属性编辑器</span><b class="ex">×</b></div>
    <div class="ebox">
      <table class="pt pte">
        <colgroup><col class="e0"><col class="e1"><col class="e2"></colgroup>
        <tr class="hd"><th></th><th>属性名称</th><th class="ov">属性值</th></tr>
        <tr><td class="no">1</td><td class="en lk">名称</td><td><span class="m">ZDYX-69</span></td></tr>
        <tr><td class="no">2</td><td class="en">构件类型</td><td>自定义线</td></tr>
        <tr><td class="no">3</td><td class="en lk">截面形状</td><td>异形</td></tr>
        <tr class="dis"><td class="no">4</td><td class="en">截面宽度<span class="m">(mm)</span></td><td><span class="m">200</span></td></tr>
        <tr class="dis"><td class="no">5</td><td class="en">截面高度<span class="m">(mm)</span></td><td><span class="m">100</span></td></tr>
        <tr><td class="no">6</td><td class="en">轴线距左边线距离</td><td><span class="m">(100)</span></td></tr>
        <tr><td class="no">7</td><td class="en lk">其它钢筋</td><td></td></tr>
        <tr><td class="no">8</td><td class="en">备注</td><td></td></tr>
        <tr><td class="no">9</td><td class="en eg"><i class="box">−</i>其它属性</td><td></td></tr>
        <tr><td class="no">10</td><td class="eb">归类名称</td><td><span class="m">(ZDYX-69)</span></td></tr>
        <tr><td class="no">11</td><td class="eb">汇总信息</td><td>(自定义线)</td></tr>
        <tr><td class="no">12</td><td class="eb">保护层厚度<span class="m">(mm)</span></td><td><span class="m">(25)</span></td></tr>
        <tr class="hl"><td class="no">13</td><td class="eb">计算设置</td><td>按设定计算设置计算</td></tr>
        <tr><td class="no">14</td><td class="eb">节点设置</td><td>按默认节点设置计算</td></tr>
        <tr><td class="no">15</td><td class="eb">搭接设置</td><td>按默认搭接设置计算</td></tr>
        <tr><td class="no">16</td><td class="eb">起点顶标高<span class="m">(m)</span></td><td>层顶标高<span class="m">(-0.03)</span></td></tr>
        <tr><td class="no">17</td><td class="eb">终点顶标高<span class="m">(m)</span></td><td>层顶标高<span class="m">(-0.03)</span></td></tr>
      </table>
      <div class="evs"><svg class="chv"><use href="#chup"/></svg><div class="evth"></div><svg class="chv"><use href="#chdn"/></svg></div>
    </div>
    <div class="etabs"><span class="tab">截面</span><span class="tab on">配筋</span></div>
    <div class="epanel">
      <div class="erow">
        <span class="et">纵筋</span><i class="sep s6"></i><span class="et e-l">直线<i class="car"></i></span>
        <span class="cbox">C8@200<i class="car"></i></span><i class="sep s6"></i>
        <span class="btn ebn"><svg class="j"><use href="#ptr"/></svg>选择</span><span class="more m3">»</span>
      </div>
      <div class="erow">
        <span class="et">横筋</span><i class="sep s7"></i><span class="et e-t">钢筋类型:</span>
        <span class="btn ebn2">直筋</span><span class="et e-g">箍筋</span><i class="sep s8"></i>
        <svg class="j"><use href="#hook"/></svg><span class="et e-h">编辑弯钩</span><span class="more m4">»</span>
      </div>
      <div class="ecut"><i class="cu c-a"></i><i class="cu c-b"></i><i class="cu c-c"></i></div>
    </div>
    <div class="estatus"><span class="es1">(X: -407 Y: 302)</span><span class="es2">选择钢筋进行编辑，选择标注进行</span></div>
  </section>
</div>
</body>
</html>
```
FILE: styles.css
```css
*{box-sizing:border-box}
html,body{margin:0;width:1366px;height:768px;overflow:hidden}
body{font:12px/1.2 "Noto Sans CJK SC","Liberation Sans",sans-serif;color:#111;background:#f0f0f0}
.defs{width:0;height:0;display:block;overflow:hidden}
.m{font:11px/1 "Liberation Mono",monospace;letter-spacing:-.6px;vertical-align:1px}
svg{display:block;flex:none}
.app{width:1366px;height:768px;display:flex;flex-direction:column;position:relative;overflow:hidden}
.i{width:14px;height:14px}
.i18{width:18px;height:16px}
.i16{width:16px;height:16px}
.j{width:15px;height:15px}
.car{display:inline-block;flex:none;width:0;height:0;margin-left:6px;border:3.500px solid transparent;border-top:4px solid #222;border-bottom:0}
.sep{display:block;flex:none;width:1px;height:20px;background:#b8b8b8}
.more{font-size:15px;line-height:12px;color:#111}

.titlebar{height:23px;background:#fff;display:flex;align-items:center;flex:none}
.tlogo{width:15px;height:15px;margin-left:3px}
.ttext{margin-left:5px;font:12.700px "Liberation Sans","Noto Sans CJK SC",sans-serif;color:#555;white-space:nowrap}
.wctl{margin-left:auto;display:flex;align-items:center;width:117px;height:23px}
.wmin{width:10px;height:1px;background:#888;margin-left:0}
.wmax{width:10px;height:10px;border:1px solid #888;margin-left:31px;box-shadow:2px -2px 0 -1px #fff,2px -2px 0 0 #888}
.wx{color:#888;font-size:13px;margin-left:36px}

.acct{height:31px;flex:none;background:#f0f0f0;display:flex;align-items:center;padding-left:937px}
.help{width:188px;height:30px;background:#f7f7f7;border-radius:3px;color:#0f5f6e;display:flex;align-items:center;padding-left:32px;margin-right:5px;font-size:12.500px}
.phone{margin-left:5px;font-size:12.500px}
.acct .car{margin-left:6px}
.bean{margin-left:8px}
.bell{width:13px;height:17px;margin-left:10px}
.acct .more{margin-left:35px}

.tb1{height:28px;flex:none;display:flex}
.band{height:28px;background:#f6f6f6;display:flex;align-items:center;border-radius:3px;flex:none;padding-bottom:2px}
.b-a{width:150px;padding-left:6px;position:relative;margin-right:2px}
.o1{margin-left:7px}
.c1{margin-left:4px}
.o2{margin-left:8px}
.s1{margin:0 8px 0 7px}
.c3{margin-left:6px}
.m1{margin-left:19px;align-self:flex-start;margin-top:2px}
.b-b{width:548px;padding-left:6px}
.m2{margin-left:auto;align-self:flex-start;margin-top:2px;margin-right:1px}
.b-c{width:547px;padding-left:8px}
.b-d{flex:1;margin-left:0;padding-left:3px}
.m5{margin-left:auto;margin-right:7px;align-self:flex-start;margin-top:2px}
.t{display:flex;align-items:center;gap:4px;margin-right:9px;white-space:nowrap;flex:none}
.t.t0{margin-right:0}
.t .car{margin-left:2px;margin-right:0}
.cw{background:#fff;box-shadow:0 0 0 2px #fff}
.off{color:#9b9b9b}
.sig{width:14px;font:bold 15px "Liberation Serif",serif;text-align:center}
.s2{margin:0 5px 0 -1px}
.s3{margin:0 7px 0 0}

.work{flex:1;display:flex;min-height:0}
.nav{width:167px;flex:none;display:flex;flex-direction:column;padding:2px 1px 3px 2px}
.navh{height:15px;border:1px solid #999;background:#f0f0f0;display:flex;align-items:center;line-height:13px;flex:none;margin-bottom:1px}
.pin{margin-left:auto;width:10px;height:12px;margin-right:3px}
.navx{width:18px;text-align:center;font-size:13px}
.nbtn{height:22px;flex:none;border:1px solid #a5a5a5;text-align:center;line-height:21px;background:#f0f0f0}
.treebox{flex:1;min-height:0;border:2px solid #a5a5a5;border-top-width:1px;background:#fff;display:flex;flex-direction:column;margin:1px 0}
.treetop{height:26px;background:#f0f0f0;flex:none;display:flex;align-items:center;padding-left:5px}
.pm{width:17px;height:15px}
.pm2{margin-left:6px}
.treewrap{flex:1;min-height:0;display:flex}
.tree{flex:1;min-width:0;overflow:hidden;padding-top:1px;background:repeating-linear-gradient(180deg,#666 0 1px,transparent 1px 2px) 11px 0/1px 100% no-repeat #fff}
.ti,.tg{height:16px;display:flex;align-items:center;white-space:nowrap}
.ti{padding-left:30px}
.tg{padding-left:5px}
.st{flex:none;width:11px;height:16px;background:repeating-linear-gradient(180deg,#666 0 1px,transparent 1px 2px) 0 0/1px 100% no-repeat,repeating-linear-gradient(90deg,#666 0 1px,transparent 1px 2px) 0 8px/100% 1px no-repeat}
.ti .i16{margin-right:5px}
.tg .i16{margin-right:4px}
.ar{width:10px;height:10px;margin:0 6px 0 1px;background:#fff}
.ar2{opacity:.5}
.sel{background:linear-gradient(#d8d8d8,#d8d8d8) 39px 0/90px 100% no-repeat}
.colic{width:13px;height:13px;margin-left:0}
.seltext{width:67px;overflow:hidden}
.vs{width:16px;flex:none;background:#f0f0f0;display:flex;flex-direction:column;align-items:center}
.chv{width:10px;height:10px}
.vs .chv{margin:4px 0}
.vth{width:15px;height:209px;margin-top:201px;margin-bottom:22px;background:#c8c8c8}
.hs{height:15px;flex:none;background:#f0f0f0;display:flex;align-items:center;padding-left:3px}
.hth{width:102px;height:15px;margin:0 8px 0 4px;background:#c8c8c8}

.main{flex:1;min-width:0;display:flex;flex-direction:column}
.tb2{height:29px;flex:none;display:flex;align-items:center;padding-top:1px}
.band2{height:28px;width:791px;display:flex;align-items:center;background:#f6f6f6;padding-left:11px;border-radius:3px}
.band2 .t,.band3 .t,.band4 .t{gap:5px;margin-right:8px}
.sp{flex:none;width:1px;height:19px;background:#bbb;margin:0 5px 0 -2px}
.band2 .t .car{margin-left:-4px}
.tb3{height:26px;flex:none;display:flex}
.band3{width:568px;height:26px;background:#f6f6f6;display:flex;align-items:center;padding-left:9px;border-radius:3px}
.band4{flex:1;height:26px;background:#f6f6f6;margin-left:4px;display:flex;align-items:center;padding-left:7px;border-radius:3px}
.band4 .t .car{margin-left:0;margin-right:-1px}
.combo{height:24px;display:flex;align-items:center;justify-content:space-between;padding:0 5px 0 2px;background:#fbfbfb;margin-right:0;flex:none}
.c60{width:60px}.c72{width:72px}
.combo .car{margin:0}
.zd{letter-spacing:.6px}
.s4{margin:0 3px 0 3px}
.btn{display:flex;align-items:center;border:1px solid #2a83cd;background:#d8e7f4;flex:none}
.bn1{width:50px;height:25px;padding-left:2px;gap:4px}
.bn2{width:74px;height:25px;padding-left:2px;gap:5px}
.tl{margin-left:2px}
.tb4{height:31px;flex:none;padding:5px 0 0 8px}
.bn3{width:30px;height:23px;padding-left:2px;gap:1px;overflow:hidden;white-space:nowrap}

.cad{height:307px;width:1199px;flex:none;background:#000}
.rb path{stroke:#f00;stroke-width:1;fill:none;shape-rendering:crispEdges}
.rd path{stroke:#8c0000;stroke-width:1;fill:none;shape-rendering:crispEdges}
.gr path{stroke:#0a8a0a;stroke-width:1;fill:none;shape-rendering:crispEdges}
.grc circle,.grc2{fill:none;stroke:#0a8a0a;stroke-width:1}
.wh{fill:#f0f0f0}
.blk{fill:#000}
.gb{fill:#9a9a9a}
.cx text,text.cx{font:15px "Liberation Sans",sans-serif;fill:#c8c8c8}
.v1{transform:translate(1027px,305px) rotate(-90deg);font-size:14px}
.v2{transform:translate(1041px,248px) rotate(-90deg);font-size:14px}
.v3{transform:translate(1041px,392px) rotate(-90deg);font-size:14px}

.inrow{height:29px;flex:none;display:flex;align-items:center;background:#f0f0f0;padding-left:3px}
.dots{width:8px;flex:none;background:radial-gradient(circle,#b5b5b5 1px,transparent 1.200px) 0 0/4px 4px}
.dr{height:26px}
.rowic{width:16px;height:16px;margin-left:2px}
.incell{height:21px;border:1px solid #aaa;background:#fff;display:flex;align-items:center;justify-content:flex-end;color:#888;flex:none;padding-right:14px;position:relative}
.spin{position:absolute;right:2px;top:4px;width:8px;height:12px;background:linear-gradient(#777,#777) 1px 1px/6px 2px no-repeat,linear-gradient(#777,#777) 1px 9px/6px 2px no-repeat}
.i-a{width:62px;margin-left:535px}
.i-b{width:56px;margin-left:5px}
.i-c{width:80px;margin-left:5px;padding-right:31px}
.gtx{color:#777;margin-left:4px}
.g2{margin-left:2px}
.s5{margin:0 3px 0 5px;height:22px}
.chk{width:11px;height:11px;border:1px solid #666;margin-left:0;background:#fff;flex:none}
.rotlbl{margin-left:8px;color:#222}

.rebar{flex:1;min-height:0;display:flex;padding-left:3px}
.dv{height:100%;padding-top:0;position:relative}
.xmark{display:block;width:10px;height:10px;margin:6px 0 0 -2px;background:#eee;border:1px solid #999;color:#b33;font-size:9px;line-height:8px;text-align:center}
.rbody{flex:1;min-width:0;display:flex;flex-direction:column}
.rtb{height:28px;flex:none;display:flex;align-items:center;padding-left:4px}
.nav1{width:12px;height:16px}
.total{margin-left:569px;white-space:nowrap}
.rtable{flex:1;min-height:0;border:1px solid #aaa;border-top-color:#bbb;margin-left:0;background:#fff;overflow:hidden;display:flex;flex-direction:column;justify-content:space-between;margin-bottom:3px}
.grid{border-collapse:collapse;table-layout:fixed;width:1186px}
.g0{width:33px}.g1{width:74px}.g2c{width:56px}.g3{width:36px}.g4{width:33px}.g5{width:201px}.g6{width:166px}.g7{width:156px}.g8{width:61px}.g9{width:288px}.g10{width:40px}.g11{width:42px}
.grid th,.grid td{border:1px solid #bdbdbd;padding:0 2px;font-weight:400;white-space:nowrap;overflow:hidden}
.grid tr:not(.gh) td:nth-child(2){border-right:1px solid #000}
.gh{height:18px}
.gh th{background:linear-gradient(#fff,#eee);text-align:center;line-height:16px}
.gh .oh{background:linear-gradient(#fad592,#efb860);color:#6b0b80}
.gh .nw{text-align:left}
.r1{height:62px}.r2{height:33px}.r3{height:19px}
.r1 td,.r2 td{background:#ccfdd6}
.r1 .sn.act{background:#fdd08a;color:#6b0b80}
.grid td.sn{background:linear-gradient(#fff,#eee);text-align:center}
.grid td.tq{background:#aee5d0}
.ctr{text-align:center}
.rbs{width:12px;height:12px;margin:0 auto}
.grid td.shape{padding:0}
.sh1{width:20px;height:60px;margin-left:92px}
.rot{font:9px "Liberation Mono",monospace}
.ushape{display:flex;align-items:center;justify-content:center;gap:2px}
.sh2{width:120px;height:20px}
.redt{font:10px "Liberation Mono",monospace;fill:#e00;text-anchor:middle}
.ghs{height:16px;flex:none;background:#f0f0f0;display:flex;align-items:center;margin-bottom:1px;padding-left:3px}
.ghth{width:575px;height:16px;margin-left:3px;background:#c8c8c8}

.status{height:20px;flex:none;display:flex;gap:2px;background:#f0f0f0;border-top:0}
.sc{background:#f6f6f6;border:1px solid #e2e2e2;line-height:18px;padding-left:1px;white-space:nowrap;overflow:hidden}
.s-a{width:148px}.s-b{width:78px}.s-c{width:98px}.s-d{width:48px}.s-e{width:914px}.s-f{flex:1}

.taskbar{height:40px;flex:none;background:#0b1014;display:flex;color:#fff}
.start{width:48px;background:#000;display:flex;align-items:center;justify-content:center}
.winl{width:16px;height:16px}
.search{width:344px;background:#333;display:flex;align-items:center;padding-left:11px;color:#8c8c8c;font-size:13px}
.ring{width:21px;height:21px;border:3px solid #d8d8d8;border-radius:50%;flex:none}
.stext{margin-left:5px}
.smic{width:12px;height:18px;margin-left:125px;color:#888}
.apps{width:445px;margin-left:2px;display:flex;flex:none}
.app1{width:49.500px;display:flex;align-items:center;justify-content:center;flex:none;border-bottom:2px solid transparent;padding-top:2px}
.run{border-bottom-color:#76b9ed;background-clip:padding-box}
.cur{background-color:#2f3539}
.ta{width:24px;height:26px}
.tray{flex:1;display:flex;padding-left:142px}
.cpu{width:70px;flex:none;display:flex;flex-direction:column;align-items:center;font-size:12.500px;line-height:19px;padding-top:2px;color:#eee}
.tc{display:flex;align-items:center;justify-content:center;flex:none;position:relative}
.tc28{width:28px}.tc23{width:23px}.tc24{width:24px}.tc22{width:22px}.tc34{width:34px}.tc25{width:25px}.tc30{width:30px}.tc46{width:46px;margin-left:-2px}
.tri{width:14px;height:14px;filter:invert(1) brightness(2)}
.tr{width:18px;height:16px}
.trk{width:26px;height:18px}
.trs{width:17px;height:19px}
.zh{font-size:14px}
.clock{width:73px;flex:none;display:flex;flex-direction:column;align-items:center;line-height:19px;padding-top:1px;font-size:12.500px;color:#eee}
.actc{width:16px;height:16px}
.badge{position:absolute;left:23px;top:19px;width:17px;height:17px;border-radius:50%;background:#444;border:1px solid #aaa;font:bold 12px/15px "Liberation Sans",sans-serif;text-align:center}

.score{position:absolute;left:1111px;top:-31px;width:50px;height:50px;border-radius:50%;background:#3fb950;border:3px solid #c4c4c4;box-shadow:0 1px 2px #888;color:#fff;font:bold 12px "Liberation Sans",sans-serif;display:flex;align-items:flex-end;justify-content:center;padding-bottom:5px}

.sogou{position:absolute;left:536px;top:30px;display:flex;align-items:flex-end}
.slogo{width:26px;height:27px;position:relative;z-index:1}
.sbar{width:159px;height:23px;margin-left:-1px;background:#fafafa;border:1px solid #d6dee6;display:flex;align-items:center;padding-left:7px;color:#2277cc}
.szh{font-size:15px;width:25px;flex:none}
.spu{font:bold 12px "Liberation Sans",sans-serif;width:20px;flex:none}
.si{width:14px;height:14px;margin-right:8px}
.sb{width:12px;height:16px;margin-right:9px}

.dialog{position:absolute;left:203px;top:138px;width:552px;height:439px;background:#efefef;border:1px solid #2a8ad8;box-shadow:0 2px 14px rgba(0,0,0,.35);display:flex;flex-direction:column}
.dtitle{height:30px;flex:none;background:#fff;display:flex;align-items:center;padding-left:8px}
.dlogo{width:15px;height:15px}
.dname{margin-left:5px;font-size:12px}
.dmin{width:12px;height:1px;background:#ccc;margin-left:331px}
.dmax{width:10px;height:10px;border:1px solid #222;margin-left:33px}
.dx{font-size:14px;color:#222;margin-left:35px}
.dbox{width:546px;height:318px;flex:none;margin-left:2px;background:#fff;border:1px solid #b5b5b5;padding:3px 0 0 0;overflow:hidden}
.pt{border-collapse:collapse;table-layout:fixed}
.ptd{width:542px}
.dc0{width:21px}.dc1{width:401px}.dc2{width:120px}
.pt th,.pt td{border:1px solid #bdbdbd;padding:0;font-weight:400;white-space:nowrap;overflow:hidden;height:19px;line-height:17px;padding-left:2px}
.pt th{text-align:center;background:linear-gradient(#fff,#ececec);height:23px;padding-left:0;font-size:12.500px}
.pte th{height:22px}
.pt th.ov{background:linear-gradient(#fad592,#efb860);color:#6b0b80}
.pt td.no{background:linear-gradient(#fafafa,#ececec);text-align:center;padding:0;font:10px/17px "Liberation Mono",monospace}
.ptd td.nm{background-color:#ffffe2}
.ptd td.gp{color:#8a8a8a;padding-left:3px}
.box{display:inline-block;vertical-align:middle;width:12px;height:12px;border:1px solid #999;background:#fff;color:#333;font:normal 12px/10px "Liberation Sans",sans-serif;text-align:center;margin-right:5px;margin-top:-2px}
.ptd td.br{padding-left:30px;background:linear-gradient(#bdbdbd,#bdbdbd) 9px 0/1px 100% no-repeat,linear-gradient(#bdbdbd,#bdbdbd) 9px 50%/17px 1px no-repeat,#ffffe2}
.ptd td.br.last{background:linear-gradient(#bdbdbd,#bdbdbd) 9px 0/1px 50% no-repeat,linear-gradient(#bdbdbd,#bdbdbd) 9px 50%/17px 1px no-repeat,#ffffe2}
.lk{color:#0000e0}
.pt .cur .no{background:#fdd08a;color:#6b0b80}
.pt .cur td:last-child{background:#d9e9f7}
.hint{margin:4px 0 0 2px;flex:none;line-height:16px}
.dfoot{margin-top:auto;display:flex;gap:15px;justify-content:flex-end;padding:0 12px 7px 0}
.dbtn{width:72px;height:23px;background:#e1e1e1;border:1px solid #adadad;text-align:center;line-height:21px}

.oval{position:absolute;left:526px;top:263px;width:220px;height:76px}

.editor{position:absolute;left:1042px;top:110px;width:281px;height:495px;background:#f0f0f0;box-shadow:0 1px 5px rgba(0,0,0,.3);display:flex;flex-direction:column}
.etitle{height:31px;flex:none;background:#fff;display:flex;align-items:center;justify-content:space-between;padding-left:8px;color:#9a9a9a;font-size:12.500px;padding-right:1px}
.ex{width:19px;height:19px;background:#e6e6e6;color:#fff;text-align:center;line-height:18px;font-size:12px}
.ebox{height:341px;flex:none;display:flex;margin:0 1px;border:1px solid #bbb;background:#fff;overflow:hidden;padding-top:1px}
.pte{width:259px;flex:none;align-self:flex-start}
.e0{width:21px}.e1{width:120px}.e2{width:118px}
.pte td{padding-left:2px}
.en{padding-left:21px!important}
.eg{padding-left:2px!important;color:#8a8a8a}
.eb{padding-left:30px!important;background:linear-gradient(#bdbdbd,#bdbdbd) 8px 0/1px 100% no-repeat,linear-gradient(#bdbdbd,#bdbdbd) 8px 50%/17px 1px no-repeat}
.dis td{color:#8a8a8a}
.dis td.no{color:#111}
.hl .no{background:#fdd08a!important;color:#6b0b80}
.hl .eb{background:linear-gradient(#fff,#fff) 8px 50%/17px 1px no-repeat,#0078d0;color:#fff}
.hl td:last-child{background:#d9e9f7}
.evs{flex:1;background:#f4f4f4;display:flex;flex-direction:column;align-items:center;padding-top:5px}
.evth{width:16px;height:122px;background:#c8c8c8;margin:2px 0 189px}
.etabs{height:26px;flex:none;display:flex;align-items:flex-end;padding-left:1px;gap:8px}
.tab{height:22px;width:32px;border:1px solid #ccc;border-bottom:0;text-align:center;line-height:22px;background:#eee}
.tab.on{width:46px;height:24px;background:#fbfbfb}
.epanel{height:73px;flex:none;margin:0 2px 0 3px;border:1px solid #ddd;background:#f8f8f8;padding:2px 1px 0;overflow:hidden}
.erow{height:28px;display:flex;align-items:center;background:#f0f0f0;margin-bottom:1px;padding-left:6px}
.erow .j{margin-left:0}
.et{flex:none;display:flex;align-items:center}
.s6{margin:0 8px 0 8px}
.e-l .car{margin-left:6px}
.cbox{width:76px;height:24px;margin-left:6px;background:#fbfbfb;display:flex;align-items:center;justify-content:space-between;padding:0 3px;font:13px "Liberation Sans",sans-serif;color:#222;flex:none}
.cbox .car{margin:0}
.ebn{width:51px;height:23px;gap:6px;padding-left:3px;margin-left:0}
.m3{margin-left:auto;margin-right:2px;align-self:flex-start;margin-top:2px}
.s7{margin:0 4px 0 5px}
.e-t{white-space:nowrap}
.ebn2{width:33px;height:23px;justify-content:center}
.e-g{margin-left:7px}
.s8{margin:0 6px 0 6px}
.e-h{margin-left:5px}
.m4{margin-left:auto;margin-right:2px;align-self:flex-start;margin-top:2px}
.ecut{display:flex;height:9px;padding-left:2px}
.cu{display:block;border:2px solid #2a83cd;border-top:0;height:8px;flex:none}
.c-a{width:51px}
.c-b{width:74px;margin-right:55px}
.c-c{width:51px}
.estatus{flex:1;display:flex;align-items:center;background:#f6f6f6;margin-top:1px;overflow:hidden;white-space:nowrap}
.es1{width:97px;padding-left:4px;font:11.500px "Liberation Sans",sans-serif;flex:none;color:#222}
.es2{border-left:1px solid #ccc;padding-left:2px}
```
